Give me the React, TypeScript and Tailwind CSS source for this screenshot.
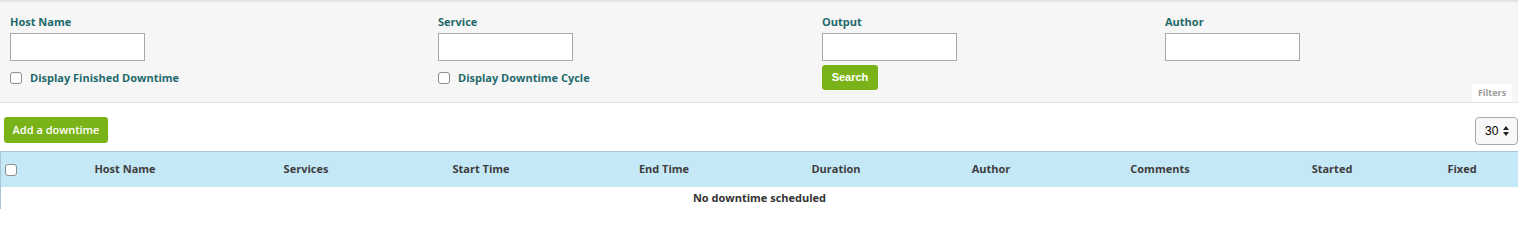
import React from "react";

const cols = [
  { label: "Host Name", w: "w-[204px]" },
  { label: "Services", w: "w-[158px]" },
  { label: "Start Time", w: "w-[192px]" },
  { label: "End Time", w: "w-[174px]" },
  { label: "Duration", w: "w-[170px]" },
  { label: "Author", w: "w-[140px]" },
  { label: "Comments", w: "w-[198px]" },
  { label: "Started", w: "w-[146px]" },
  { label: "Fixed", w: "w-[114px]" },
];

function Box() {
  return <span className="block w-[12px] h-[12px] rounded-[3px] border border-[#8d8d8d] bg-white shrink-0" />;
}

function Field({ label, w, children }: { label: string; w: string; children?: React.ReactNode }) {
  return (
    <div className={`${w} shrink-0 flex flex-col`}>
      <div className="text-[11px] leading-[15px] font-bold text-[#1f6a6b]">{label}</div>
      <div className="mt-[4px] w-[135px] h-[28px] border border-[#a9a9a9] bg-white" />
      {children}
    </div>
  );
}

export default function App() {
  return (
    <div className="w-[1518px] h-[209px] overflow-hidden bg-white" style={{ fontFamily: '"Open Sans", sans-serif' }}>
      <div className="relative h-[103px] bg-[#f6f6f6] border-t-2 border-t-[#e4e4e4] border-b border-b-[#e2e2e2] pl-[10px] pt-[12px]">
        <div className="flex">
          <Field label="Host Name" w="w-[428px]">
            <div className="mt-[11px] flex items-center gap-[8px]">
              <Box />
              <span className="text-[11px] leading-[12px] font-bold text-[#1f6a6b]">Display Finished Downtime</span>
            </div>
          </Field>
          <Field label="Service" w="w-[384px]">
            <div className="mt-[11px] flex items-center gap-[8px]">
              <Box />
              <span className="text-[11px] leading-[12px] font-bold text-[#1f6a6b]">Display Downtime Cycle</span>
            </div>
          </Field>
          <Field label="Output" w="w-[343px]">
            <div className="mt-[4px] w-[56px] h-[25px] rounded-[3px] bg-[#7ab317] text-white text-[11px] font-bold flex items-center justify-center" style={{ fontFamily: '"Liberation Sans", Arial, sans-serif' }}>
              Search
            </div>
          </Field>
          <Field label="Author" w="w-[343px]" />
        </div>
        <div className="absolute right-[6px] bottom-0 w-[40px] h-[18px] bg-white text-[9px] font-bold text-[#9a9a9a] flex items-center justify-center">
          Filters
        </div>
      </div>
      <div className="flex items-center justify-between pl-[4px] pt-[14px] h-[48px]">
        <div className="w-[104px] h-[26px] rounded-[3px] bg-[#7ab317] text-white text-[11px] font-semibold flex items-center justify-center self-start">
          Add a downtime
        </div>
        <div className="w-[43px] h-[28px] rounded-[4px] border border-[#a8a8a8] bg-[#f8f8f8] flex items-center pl-[9px] gap-[5px] self-start" style={{ fontFamily: '"Liberation Sans", Arial, sans-serif' }}>
          <span className="text-[12px] text-black">30</span>
          <svg width="6" height="10" viewBox="0 0 6 10"><path d="M3 0 L6 4 L0 4 Z M0 6 L6 6 L3 10 Z" fill="#222" /></svg>
        </div>
      </div>
      <div className="border-t border-l border-[#a9c5d6]">
        <div className="flex h-[35px] bg-[#c5e8f7] items-center">
          <div className="w-[22px] shrink-0 flex items-center justify-start pl-[4px]">
            <Box />
          </div>
          {cols.map((c) => (
            <div key={c.label} className={`${c.w} shrink-0 text-center text-[11px] font-bold text-[#3d3d3d]`}>
              {c.label}
            </div>
          ))}
        </div>
        <div className="h-[23px] flex items-center justify-center text-[11px] font-bold text-[#333]">
          No downtime scheduled
        </div>
      </div>
    </div>
  );
}
